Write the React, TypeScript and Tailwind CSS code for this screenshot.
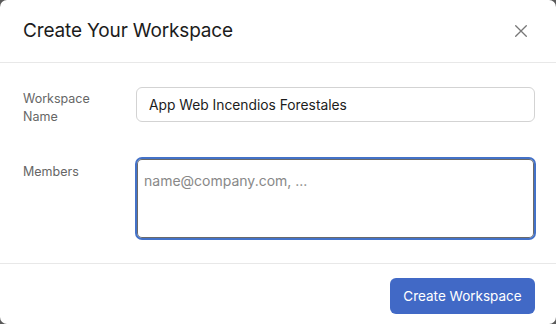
import React from "react";

export default function App() {
  return (
    <div className="w-[556px] h-[324px] bg-[#5a5a5a]" style={{ fontFamily: "Inter, 'Liberation Sans', sans-serif" }}>
      <div className="w-full h-full bg-white rounded-[7px] flex flex-col">
        <div className="h-[63px] shrink-0 px-[23px] flex items-center justify-between border-b border-[#e8e8e8]">
          <h1 className="text-[19px] text-[#1c1c1c] font-normal tracking-[-0.15px]">Create Your Workspace</h1>
          <button className="w-[20px] h-[20px] flex items-center justify-center mr-[2px]" aria-label="Close">
            <svg width="12" height="12" viewBox="0 0 12 12" fill="none" stroke="#777" strokeWidth="1.3" strokeLinecap="round">
              <path d="M0.7 0.7L11.3 11.3M11.3 0.7L0.7 11.3" />
            </svg>
          </button>
        </div>
        <div className="flex-1 pr-[20px] pl-[23px] pt-[24px] flex flex-col">
          <div className="flex h-[35px]">
            <div className="w-[113px] pt-[3px] text-[12.5px] leading-[18px] text-[#666]">
              Workspace
              <br />
              Name
            </div>
            <input
              className="flex-1 h-[35px] mr-[1px] border border-[#d3d3d3] rounded-[6px] px-[12px] text-[13.8px] text-[#1c1c1c] outline-none"
              defaultValue="App Web Incendios Forestales"
            />
          </div>
          <div className="flex mt-[35px]">
            <div className="w-[112px] pt-[6px] text-[12.5px] leading-[18px] text-[#666]">Members</div>
            <textarea
              className="flex-1 h-[83px] border-2 border-[#4472c8] rounded-[7px] px-[7px] py-[13px] text-[14px] leading-[18px] text-[#1c1c1c] outline-none resize-none shadow-[inset_0_0_0_1px_#6a6a6a] placeholder:text-[#888]"
              placeholder="name@company.com, ..."
            />
          </div>
        </div>
        <div className="h-[61px] shrink-0 border-t border-[#e8e8e8] flex items-start justify-end pt-[14px] pr-[21px]">
          <button className="w-[145px] h-[36px] rounded-[6px] bg-[#4169c6] text-white text-[13.5px]">Create Workspace</button>
        </div>
      </div>
    </div>
  );
}
